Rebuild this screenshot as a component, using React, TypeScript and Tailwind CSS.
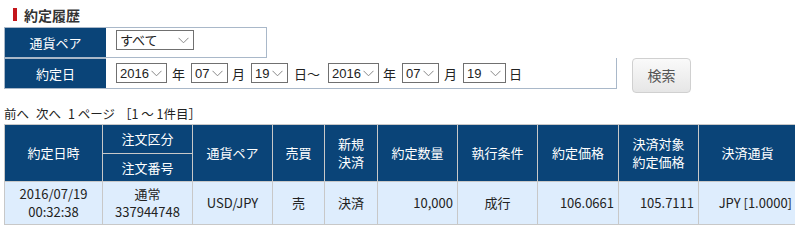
import React from 'react';

const font = { fontFamily: '"Noto Sans CJK JP", "Noto Sans", sans-serif' };
const selectFont = { fontFamily: '"Liberation Sans", "Noto Sans CJK JP", sans-serif' };

const Chevron = () => (
  <svg width="11" height="7" viewBox="0 0 11 7" className="shrink-0">
    <path d="M0.5 0.8 L5.5 5.8 L10.5 0.8" fill="none" stroke="#888" strokeWidth="1" />
  </svg>
);

const FakeSelect = ({ value, width }: { value: string; width: string }) => (
  <div
    className={`${width} h-[20px] border border-[#707070] bg-white flex items-center justify-between pl-[3px] pr-[4px] text-[13px] leading-none text-[#222]`}
    style={selectFont}
  >
    <span>{value}</span>
    <Chevron />
  </div>
);

const headers = [
  { w: 'w-[98px]', label: '約定日時' },
  { w: 'w-[90px]', label: '' },
  { w: 'w-[80px]', label: '通貨ペア' },
  { w: 'w-[52px]', label: '売買' },
  { w: 'w-[53px]', label: '新規\n決済' },
  { w: 'w-[80px]', label: '約定数量' },
  { w: 'w-[80px]', label: '執行条件' },
  { w: 'w-[81px]', label: '約定価格' },
  { w: 'w-[80px]', label: '決済対象\n約定価格' },
  { w: 'w-[98px]', label: '決済通貨' },
];

export default function App() {
  return (
    <div className="w-[795px] h-[249px] bg-white overflow-hidden text-[#222]" style={font}>
      <div className="flex items-center pt-[8px] pl-[13px] h-[21px]">
        <div className="w-[4px] h-[13px] bg-[#c4161c]" />
        <div className="ml-[7px] text-[14px] font-bold leading-none text-[#333]">約定履歴</div>
      </div>

      <div className="flex ml-[4px] mt-[6px]">
        <div className="flex flex-col">
          <div className="flex h-[31px] w-[263px] border border-[#a9b8c9]">
            <div className="w-[101px] bg-[#0a4478] text-white text-[13px] flex items-center justify-center">通貨ペア</div>
            <div className="flex-1 pl-[10px] pt-[2px]">
              <FakeSelect value="すべて" width="w-[78px]" />
            </div>
          </div>
          <div className="flex items-center h-[31px] w-[613px] border border-t-0 border-[#a9b8c9]">
            <div className="w-[101px] self-stretch bg-[#0a4478] text-white text-[13px] flex items-center justify-center border-t border-[#a9b8c9]">約定日</div>
            <div className="flex items-center pl-[10px] text-[13px] leading-none">
              <FakeSelect value="2016" width="w-[51px]" />
              <span className="ml-[5px] mr-[6px]">年</span>
              <FakeSelect value="07" width="w-[37px]" />
              <span className="ml-[4px] mr-[6px]">月</span>
              <FakeSelect value="19" width="w-[37px]" />
              <span className="ml-[6px] mr-[8px]">日～</span>
              <FakeSelect value="2016" width="w-[51px]" />
              <span className="ml-[4px] mr-[6px]">年</span>
              <FakeSelect value="07" width="w-[37px]" />
              <span className="ml-[5px] mr-[6px]">月</span>
              <FakeSelect value="19" width="w-[43px]" />
              <span className="ml-[3px]">日</span>
            </div>
          </div>
        </div>
        <button className="ml-[15px] mt-[31px] w-[59px] h-[35px] rounded-[4px] border border-[#d0d0d0] bg-gradient-to-b from-[#fafafa] to-[#e6e6e6] text-[#555] text-[14px]">
          検索
        </button>
      </div>

      <div className="flex ml-[4px] mt-[15px] text-[12.5px] leading-none h-[16px] whitespace-pre">
        <span>前へ</span>
        <span className="ml-[7px]">次へ</span>
        <span className="ml-[7px]">1 ページ</span>
        <span className="ml-[4px]">［1 ～ 1件目］</span>
      </div>

      <table className="ml-[4px] table-fixed border-collapse w-[793px] text-[13px] leading-[18px]">
        <colgroup>
          {headers.map((h, i) => (
            <col key={i} className={h.w} />
          ))}
        </colgroup>
        <thead>
          <tr className="h-[29px]">
            <th rowSpan={2} className="bg-[#0a4478] text-white font-normal border border-[#c8c8c8]">約定日時</th>
            <th className="bg-[#0a4478] text-white font-normal border border-[#c8c8c8]">注文区分</th>
            {headers.slice(2).map((h, i) => (
              <th key={i} rowSpan={2} className="bg-[#0a4478] text-white font-normal border border-[#c8c8c8] whitespace-pre-line">
                {h.label}
              </th>
            ))}
          </tr>
          <tr className="h-[28px]">
            <th className="bg-[#0a4478] text-white font-normal border border-[#c8c8c8]">注文番号</th>
          </tr>
        </thead>
        <tbody>
          <tr className="h-[43px] bg-[#deedfd]">
            <td className="border border-[#c8c8c8] text-center">2016/07/19<br />00:32:38</td>
            <td className="border border-[#c8c8c8] text-center">通常<br />337944748</td>
            <td className="border border-[#c8c8c8] text-center">USD/JPY</td>
            <td className="border border-[#c8c8c8] text-center">売</td>
            <td className="border border-[#c8c8c8] text-center">決済</td>
            <td className="border border-[#c8c8c8] text-right pr-[4px]">10,000</td>
            <td className="border border-[#c8c8c8] text-center">成行</td>
            <td className="border border-[#c8c8c8] text-right pr-[4px]">106.0661</td>
            <td className="border border-[#c8c8c8] text-right pr-[4px]">105.7111</td>
            <td className="border border-[#c8c8c8] text-right pr-[4px]">JPY [1.0000]</td>
          </tr>
        </tbody>
      </table>
    </div>
  );
}
